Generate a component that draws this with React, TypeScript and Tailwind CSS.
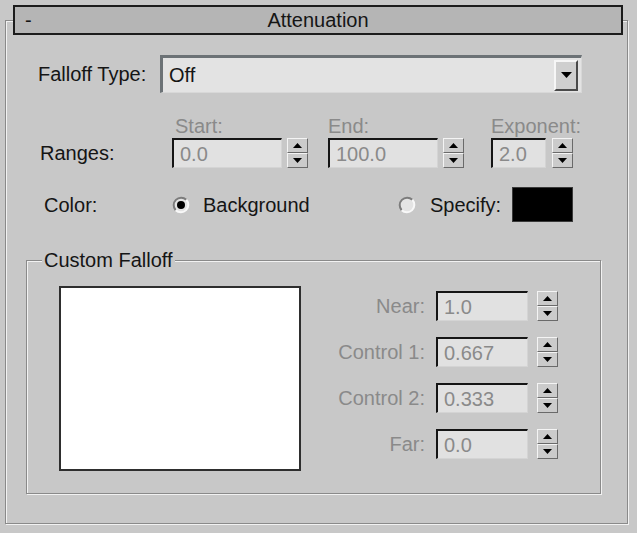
import React from "react";

const font = { fontFamily: '"Liberation Sans", Arial, sans-serif' };

const Spinner: React.FC = () => {
  return (
    <div className="flex flex-col w-[21px] h-[30px] shrink-0">
      <div className="h-[15px] flex items-center justify-center bg-[#cbcbcb] border-t border-l border-[#f4f4f4] border-b border-r border-b-[#6a6a6a] border-r-[#6a6a6a]">
        <svg width="9" height="5" viewBox="0 0 9 5">
          <path d="M4.5 0 L9 5 L0 5 Z" fill="#000" />
        </svg>
      </div>
      <div className="h-[15px] flex items-center justify-center bg-[#cbcbcb] border-t border-l border-[#f4f4f4] border-b border-r border-b-[#6a6a6a] border-r-[#6a6a6a]">
        <svg width="9" height="5" viewBox="0 0 9 5">
          <path d="M0 0 L9 0 L4.5 5 Z" fill="#000" />
        </svg>
      </div>
    </div>
  );
};

interface SpinFieldProps {
  value: string;
  width: string;
  gap: string;
}

const SpinField: React.FC<SpinFieldProps> = ({ value, width, gap }) => {
  return (
    <div className={`flex items-center ${gap}`}>
      <div
        className={`${width} h-[30px] bg-[#e1e1e1] border-t-2 border-l-2 border-[#151515] border-b border-r border-b-[#d4d4d4] border-r-[#d4d4d4] flex items-center pl-[6px] text-[20px] leading-none text-[#8a8a8a]`}
      >
        {value}
      </div>
      <Spinner />
    </div>
  );
};

const Radio: React.FC<{ checked?: boolean }> = ({ checked }) => {
  return (
    <svg width="18" height="18" viewBox="0 0 18 18" className="shrink-0">
      <circle cx="9" cy="9" r="7.5" fill="#e4e4e4" />
      <path d="M3.7 14.3 A7.5 7.5 0 0 1 14.3 3.7" fill="none" stroke="#7c7c7c" strokeWidth="2" />
      <path d="M14.3 3.7 A7.5 7.5 0 0 1 3.7 14.3" fill="none" stroke="#f8f8f8" strokeWidth="2" />
      {checked && <circle cx="9" cy="9" r="4" fill="#000" />}
    </svg>
  );
};

const FalloffRow: React.FC<{ label: string; value: string }> = ({ label, value }) => {
  return (
    <div className="flex items-center h-[30px]">
      <span className="w-[100px] text-right text-[#8a8a8a] pr-[11px]">{label}</span>
      <SpinField value={value} width="w-[92px]" gap="gap-[9px]" />
    </div>
  );
};

export default function App() {
  return (
    <div
      className="w-[637px] h-[533px] bg-[#c8c8c8] overflow-hidden pt-[5px] text-[20px] text-[#151515]"
      style={font}
    >
      <div className="relative z-10 ml-[13px] w-[610px] h-[30px] border-2 border-[#1c1c1c] bg-[#b5b5b5] flex items-center">
        <span className="w-[26px] pl-[10px] leading-none">-</span>
        <span className="flex-1 text-center pr-[26px] leading-none">Attenuation</span>
      </div>
      <div className="-mt-[15px] ml-[5px] w-[623px] h-[504px] border border-[#8a8a8a] shadow-[inset_1px_1px_0_#f2f2f2,1px_1px_0_#f2f2f2]">
        {/* Falloff type */}
        <div className="flex items-center mt-[34px] h-[38px]">
          <span className="w-[154px] pl-[32px]">Falloff Type:</span>
          <div className="w-[422px] h-[38px] bg-[#e3e3e3] border-t-[3px] border-l-[3px] border-[#6c7276] border-b border-r border-b-[#d8d8d8] border-r-[#d8d8d8] flex items-center justify-between pl-[6px] pr-[3px]">
            <span className="leading-none">Off</span>
            <div className="w-[24px] h-[31px] bg-[#cfcfcf] border-t-2 border-l-2 border-[#f6f6f6] border-b-2 border-r-2 border-b-[#4a4a4a] border-r-[#4a4a4a] flex items-center justify-center">
              <svg width="11" height="6" viewBox="0 0 11 6">
                <path d="M0 0 L11 0 L5.5 6 Z" fill="#000" />
              </svg>
            </div>
          </div>
        </div>

        {/* Ranges */}
        <div className="flex items-end mt-[23px]">
          <span className="w-[166px] pl-[34px] h-[30px] flex items-center">Ranges:</span>
          <div className="flex flex-col gap-[2px]">
            <span className="h-[20px] leading-[20px] pl-[3px] text-[#8a8a8a]">Start:</span>
            <SpinField value="0.0" width="w-[110px]" gap="gap-[5px]" />
          </div>
          <div className="flex flex-col gap-[2px] ml-[20px]">
            <span className="h-[20px] leading-[20px] text-[#8a8a8a]">End:</span>
            <SpinField value="100.0" width="w-[110px]" gap="gap-[5px]" />
          </div>
          <div className="flex flex-col gap-[2px] ml-[27px]">
            <span className="h-[20px] leading-[20px] text-[#8a8a8a]">Exponent:</span>
            <SpinField value="2.0" width="w-[55px]" gap="gap-[6px]" />
          </div>
        </div>

        {/* Color */}
        <div className="flex items-center mt-[19px] h-[35px]">
          <span className="w-[166px] pl-[38px]">Color:</span>
          <Radio checked />
          <span className="ml-[13px] w-[195px]">Background</span>
          <Radio />
          <span className="ml-[14px]">Specify:</span>
          <div className="ml-[11px] w-[61px] h-[35px] bg-black border border-[#3a3a3a]" />
        </div>

        {/* Custom falloff */}
        <div className="ml-[20px] mt-[38px] w-[575px] h-[234px] border border-[#8a8a8a] shadow-[inset_1px_1px_0_#f2f2f2,1px_1px_0_#f2f2f2]">
          <div className="-mt-[13px] ml-[15px] w-fit px-[2px] bg-[#c8c8c8] h-[24px] leading-[24px]">
            Custom Falloff
          </div>
          <div className="flex mt-[14px]">
            <div className="ml-[32px] w-[242px] h-[185px] bg-white border-2 border-[#2e2e2e]" />
            <div className="ml-[35px] mt-[5px] flex flex-col gap-[16px]">
              <FalloffRow label="Near:" value="1.0" />
              <FalloffRow label="Control 1:" value="0.667" />
              <FalloffRow label="Control 2:" value="0.333" />
              <FalloffRow label="Far:" value="0.0" />
            </div>
          </div>
        </div>
      </div>
    </div>
  );
}
